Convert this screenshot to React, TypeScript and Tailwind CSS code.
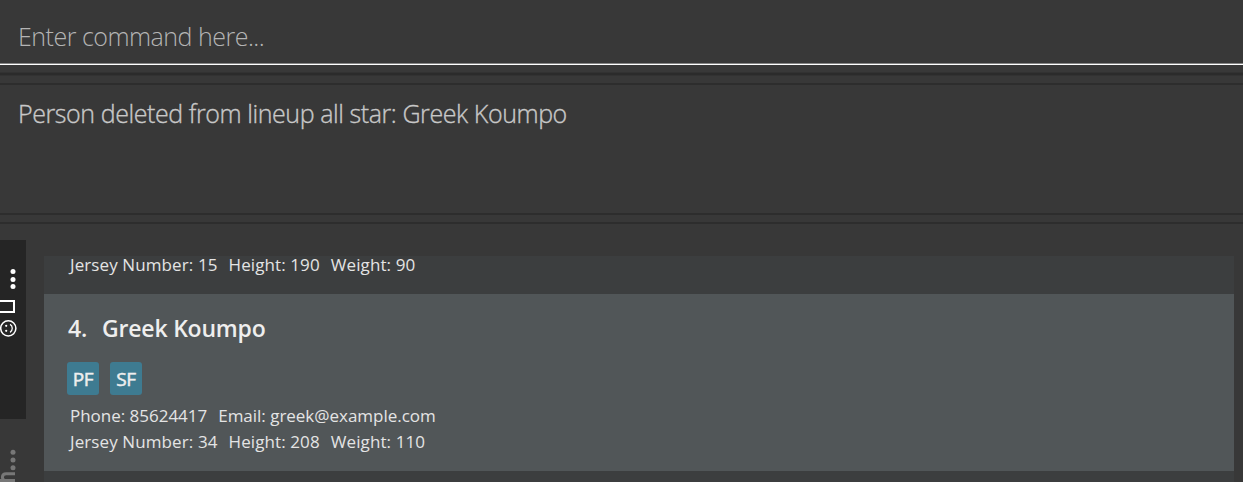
import React from "react";

function Tag({ label }: { label: string }) {
  return (
    <span className="flex h-[33px] w-8 items-center justify-center rounded-[3px] bg-[#3e7b91] pt-[2px] text-[19px] leading-none tracking-[-0.3px] text-[#eeeeee] [-webkit-text-stroke:0.5px_#eeeeee]">
      {label}
    </span>
  );
}

function Stats({ items }: { items: string[] }) {
  return (
    <div className="flex h-[26px] items-center gap-[11px] whitespace-pre text-[17px] leading-[26px] tracking-[0.1px] text-[#e4e4e4]">
      {items.map((item) => (
        <span key={item}>{item}</span>
      ))}
    </div>
  );
}

function Contact({ phone, email }: { phone: string; email: string }) {
  return (
    <div className="flex h-[26px] items-center gap-[11px] whitespace-pre text-[17px] leading-[26px] tracking-[-0.02px] text-[#e4e4e4]">
      <span>Phone: {phone}</span>
      <span>Email: {email}</span>
    </div>
  );
}

function Sidebar() {
  return (
    <aside className="flex w-[26px] shrink-0 flex-col pt-[16px]">
      <div className="h-[179px] w-[26px] bg-[#252525] pt-[28px]">
        <svg width="26" height="72" viewBox="0 0 26 72" fill="none">
          <g fill="#ffffff">
            <circle cx="13" cy="3.5" r="2.5" />
            <circle cx="13" cy="11.5" r="2.5" />
            <circle cx="13" cy="18.5" r="2.5" />
          </g>
          <path d="M-2 33H14V44H-2" stroke="#ffffff" strokeWidth="2" />
          <circle cx="8.3" cy="60.3" r="7.6" stroke="#ffffff" strokeWidth="1.5" />
          <path d="M10 56.3C13 57.8 13 62.8 10 64.3" stroke="#ffffff" strokeWidth="1.3" />
          <g fill="#ffffff">
            <circle cx="6.2" cy="57.8" r="1.1" />
            <circle cx="6.2" cy="62.8" r="1.1" />
          </g>
        </svg>
      </div>
      <svg className="mt-[30px]" width="26" height="33" viewBox="0 0 26 33" fill="none">
        <g fill="#777777">
          <circle cx="13" cy="3.3" r="2.5" />
          <circle cx="13" cy="11" r="2.5" />
          <circle cx="13" cy="18.7" r="2.5" />
        </g>
        <path d="M15 24.8H6.2C1.2 24.8 1.2 31.5 6 31.5M0 31.5H15" stroke="#777777" strokeWidth="3" />
      </svg>
    </aside>
  );
}

export default function App() {
  return (
    <div className="flex h-[482px] w-full flex-col overflow-hidden bg-[#383838] font-['Open_Sans','Noto_Sans',sans-serif]">
      <div className="flex h-[65px] shrink-0 flex-col border-b border-white">
        <div className="flex h-[63px] items-center whitespace-pre pl-[18px] pt-[10px] text-[25px] font-light tracking-[-0.5px] text-[#b4b4b4]">
          Enter command here...
        </div>
        <div className="h-px bg-[#858585]" />
      </div>
      <div className="h-[7px] shrink-0" />
      <div className="h-[4px] shrink-0 border-y border-[#323232] bg-[#2b2b2b]" />
      <div className="h-[7px] shrink-0" />
      <div className="h-[132px] shrink-0 border-y-2 border-[#2d2d2d] pl-[18px] pt-[10px]">
        <p className="whitespace-pre text-[25px] font-light leading-[36px] tracking-[-0.42px] text-[#c8c8c8] [-webkit-text-stroke:0.35px_#c8c8c8]">
          Person deleted from lineup all star: Greek Koumpo
        </p>
      </div>
      <div className="h-[7px] shrink-0" />
      <div className="h-[2px] shrink-0 bg-[#2d2d2d]" />
      <main className="flex h-[258px] shrink-0">
        <Sidebar />
        <section className="ml-[18px] mt-[32px] w-[1190px]">
          <div className="flex h-[38px] items-start bg-[#3c3e3f] pl-[26px]">
            <div className="-mt-[4px]">
              <Stats items={["Jersey Number: 15", "Height: 190", "Weight: 90"]} />
            </div>
          </div>
          <article className="h-[177px] bg-[#515658] pl-[23px] pt-[17px]">
            <h2 className="flex h-[34px] items-center gap-[15px] pl-px text-[23px] font-semibold leading-none tracking-[-0.2px] text-[#eeeeee]">
              <span>4.</span>
              <span>Greek Koumpo</span>
            </h2>
            <div className="mt-[17px] flex gap-[11px]">
              <Tag label="PF" />
              <Tag label="SF" />
            </div>
            <div className="mt-[8px] pl-[3px]">
              <Contact phone="85624417" email="greek@example.com" />
              <Stats items={["Jersey Number: 34", "Height: 208", "Weight: 110"]} />
            </div>
          </article>
          <div className="h-[11px] bg-[#3c3e3f]" />
        </section>
      </main>
    </div>
  );
}
